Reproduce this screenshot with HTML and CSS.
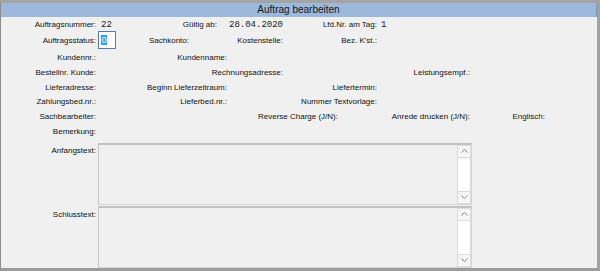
FILE: index.html
```html
<!DOCTYPE html>
<html lang="de">
<head>
<meta charset="utf-8">
<title>Auftrag bearbeiten</title>
<link rel="stylesheet" href="styles.css">
</head>
<body>
<div class="window">
  <div class="titlebar">Auftrag bearbeiten</div>
  <div class="form">
    <!-- row 1 -->
    <span class="lbl r1 c1-2">Auftragsnummer:</span>
    <span class="val r1 c2-3 pl5">22</span>
    <span class="lbl r1 c3-5">Gültig ab:</span>
    <span class="val r1 c5-7 pl12">28.04.2020</span>
    <span class="lbl r1 c7-9">Lfd.Nr. am Tag:</span>
    <span class="val r1 c9-10 pl4">1</span>
    <!-- row 2 -->
    <span class="lbl r2 c1-2">Auftragsstatus:</span>
    <span class="input r2 c2-3"><span class="sel">0</span></span>
    <span class="lbl r2 c3-4">Sachkonto:</span>
    <span class="lbl r2 c4-7">Kostenstelle:</span>
    <span class="lbl r2 c7-9">Bez. K'st.:</span>
    <!-- row 3 -->
    <span class="lbl r3 c1-2">Kundennr.:</span>
    <span class="lbl r3 c2-6">Kundenname:</span>
    <!-- row 4 -->
    <span class="lbl r4 c1-2">Bestellnr. Kunde:</span>
    <span class="lbl r4 c2-7">Rechnungsadresse:</span>
    <span class="lbl r4 c9-10">Leistungsempf.:</span>
    <!-- row 5 -->
    <span class="lbl r5 c1-2">Lieferadresse:</span>
    <span class="lbl r5 c2-6">Beginn Lieferzeitraum:</span>
    <span class="lbl r5 c6-9">Liefertermin:</span>
    <!-- row 6 -->
    <span class="lbl r6 c1-2">Zahlungsbed.nr.:</span>
    <span class="lbl r6 c2-6">Lieferbed.nr.:</span>
    <span class="lbl r6 c6-9">Nummer Textvorlage:</span>
    <!-- row 7 -->
    <span class="lbl r7 c1-2">Sachbearbeiter:</span>
    <span class="lbl r7 c2-8">Reverse Charge (J/N):</span>
    <span class="lbl r7 c8-10">Anrede drucken (J/N):</span>
    <span class="lbl r7 c10-11">Englisch:</span>
    <!-- row 8 -->
    <span class="lbl r8 c1-2">Bemerkung:</span>
  </div>
  <div class="texts">
    <div class="textrow">
      <span class="tlbl first">Anfangstext:</span>
      <div class="memo">
        <div class="memo-body"></div>
        <div class="scroll">
          <div class="sbtn"><svg width="7" height="4" viewBox="0 0 7 4"><polyline points="0.5,3.5 3.5,0.5 6.5,3.5" fill="none" stroke="#8a8a8a" stroke-width="1"/></svg></div>
          <div class="track"></div>
          <div class="sbtn"><svg width="7" height="4" viewBox="0 0 7 4"><polyline points="0.5,0.5 3.5,3.5 6.5,0.5" fill="none" stroke="#8a8a8a" stroke-width="1"/></svg></div>
        </div>
      </div>
    </div>
    <div class="textrow">
      <span class="tlbl second">Schlusstext:</span>
      <div class="memo">
        <div class="memo-body"></div>
        <div class="scroll">
          <div class="sbtn"><svg width="7" height="4" viewBox="0 0 7 4"><polyline points="0.5,3.5 3.5,0.5 6.5,3.5" fill="none" stroke="#8a8a8a" stroke-width="1"/></svg></div>
          <div class="track"></div>
          <div class="sbtn"><svg width="7" height="4" viewBox="0 0 7 4"><polyline points="0.5,0.5 3.5,3.5 6.5,0.5" fill="none" stroke="#8a8a8a" stroke-width="1"/></svg></div>
        </div>
      </div>
    </div>
  </div>
</div>
</body>
</html>
```
FILE: styles.css
```css
html, body {
  margin: 0;
  padding: 0;
}
body {
  width: 600px;
  height: 271px;
  overflow: hidden;
  background: #f0f0f0;
  font-family: "Liberation Sans", Arial, sans-serif;
  color: #111;
}
.window {
  box-sizing: border-box;
  width: 600px;
  height: 271px;
  border-top: 3px solid #a4a4a4;
  border-left: 1px solid #8c8c8c;
  border-right: 3px solid #a2a2a2;
  border-bottom: 3px solid #9c9c9c;
  display: flex;
  flex-direction: column;
  background: #f0f0f0;
}
.titlebar {
  height: 14px;
  line-height: 14px;
  background: #9cb9dc;
  border-right: 1px solid #7f98b8;
  text-align: center;
  font-size: 10px;
  color: #161616;
}
.form {
  display: grid;
  grid-template-columns: 95px 51px 42px 28px 10px 56px 55px 39px 93px 75px 1fr;
  grid-template-rows: 15px 18px 16px repeat(5, 14.6px);
  font-size: 8px;
}
.lbl {
  text-align: right;
  align-self: center;
  white-space: nowrap;
  line-height: 10px;
}
.val {
  align-self: center;
  font-family: "Liberation Mono", "Courier New", monospace;
  font-size: 9px;
  font-weight: normal;
  color: #1a1a1a;
  line-height: 10px;
  white-space: nowrap;
}
.pl4 { padding-left: 4px; }
.pl5 { padding-left: 5px; }
.pl12 { padding-left: 12px; }

.r1 { grid-row: 1; }
.r2 { grid-row: 2; }
.r3 { grid-row: 3; }
.r4 { grid-row: 4; }
.r5 { grid-row: 5; }
.r6 { grid-row: 6; }
.r7 { grid-row: 7; }
.r8 { grid-row: 8; }

.c1-2 { grid-column: 1 / 2; }
.c2-3 { grid-column: 2 / 3; }
.c2-6 { grid-column: 2 / 6; }
.c2-7 { grid-column: 2 / 7; }
.c2-8 { grid-column: 2 / 8; }
.c3-4 { grid-column: 3 / 4; }
.c3-5 { grid-column: 3 / 5; }
.c4-7 { grid-column: 4 / 7; }
.c5-7 { grid-column: 5 / 7; }
.c6-9 { grid-column: 6 / 9; }
.c7-9 { grid-column: 7 / 9; }
.c8-10 { grid-column: 8 / 10; }
.c9-10 { grid-column: 9 / 10; }
.c10-11 { grid-column: 10 / 11; }

.input {
  justify-self: start;
  align-self: start;
  box-sizing: border-box;
  margin-left: 2px;
  margin-top: -1px;
  width: 18px;
  height: 18px;
  border: 1px solid #4f7bbb;
  background: #ffffff;
  padding: 3px 0 0 2px;
}
.sel {
  display: block;
  width: 6px;
  height: 10px;
  background: #3399ff;
  color: #ffffff;
  font-family: "Liberation Sans", Arial, sans-serif;
  font-size: 9px;
  line-height: 10px;
  text-align: center;
}

.texts {
  margin-top: 4px;
  display: flex;
  flex-direction: column;
  gap: 1px;
}
.textrow {
  display: flex;
  height: 62px;
}
.tlbl {
  width: 95px;
  text-align: right;
  font-size: 8px;
  line-height: 10px;
  white-space: nowrap;
}
.tlbl.first { padding-top: 3px; }
.tlbl.second { padding-top: 4px; }
.memo {
  margin-left: 2px;
  width: 374px;
  box-sizing: border-box;
  display: flex;
  border-top: 2px solid #c2c2c2;
  border-left: 1px solid #c6c6c6;
  border-right: 1px solid #d6d6d6;
  border-bottom: 1px solid #d6d6d6;
  background: #f0f0f0;
}
.memo-body {
  flex: 1;
}
.scroll {
  width: 14px;
  box-sizing: border-box;
  padding: 1px;
  background: #dcdcdc;
  display: flex;
  flex-direction: column;
  gap: 1px;
}
.sbtn {
  height: 11px;
  background: #f6f6f6;
  display: flex;
  align-items: center;
  justify-content: center;
}
.track {
  flex: 1;
  background: #ffffff;
}
```
